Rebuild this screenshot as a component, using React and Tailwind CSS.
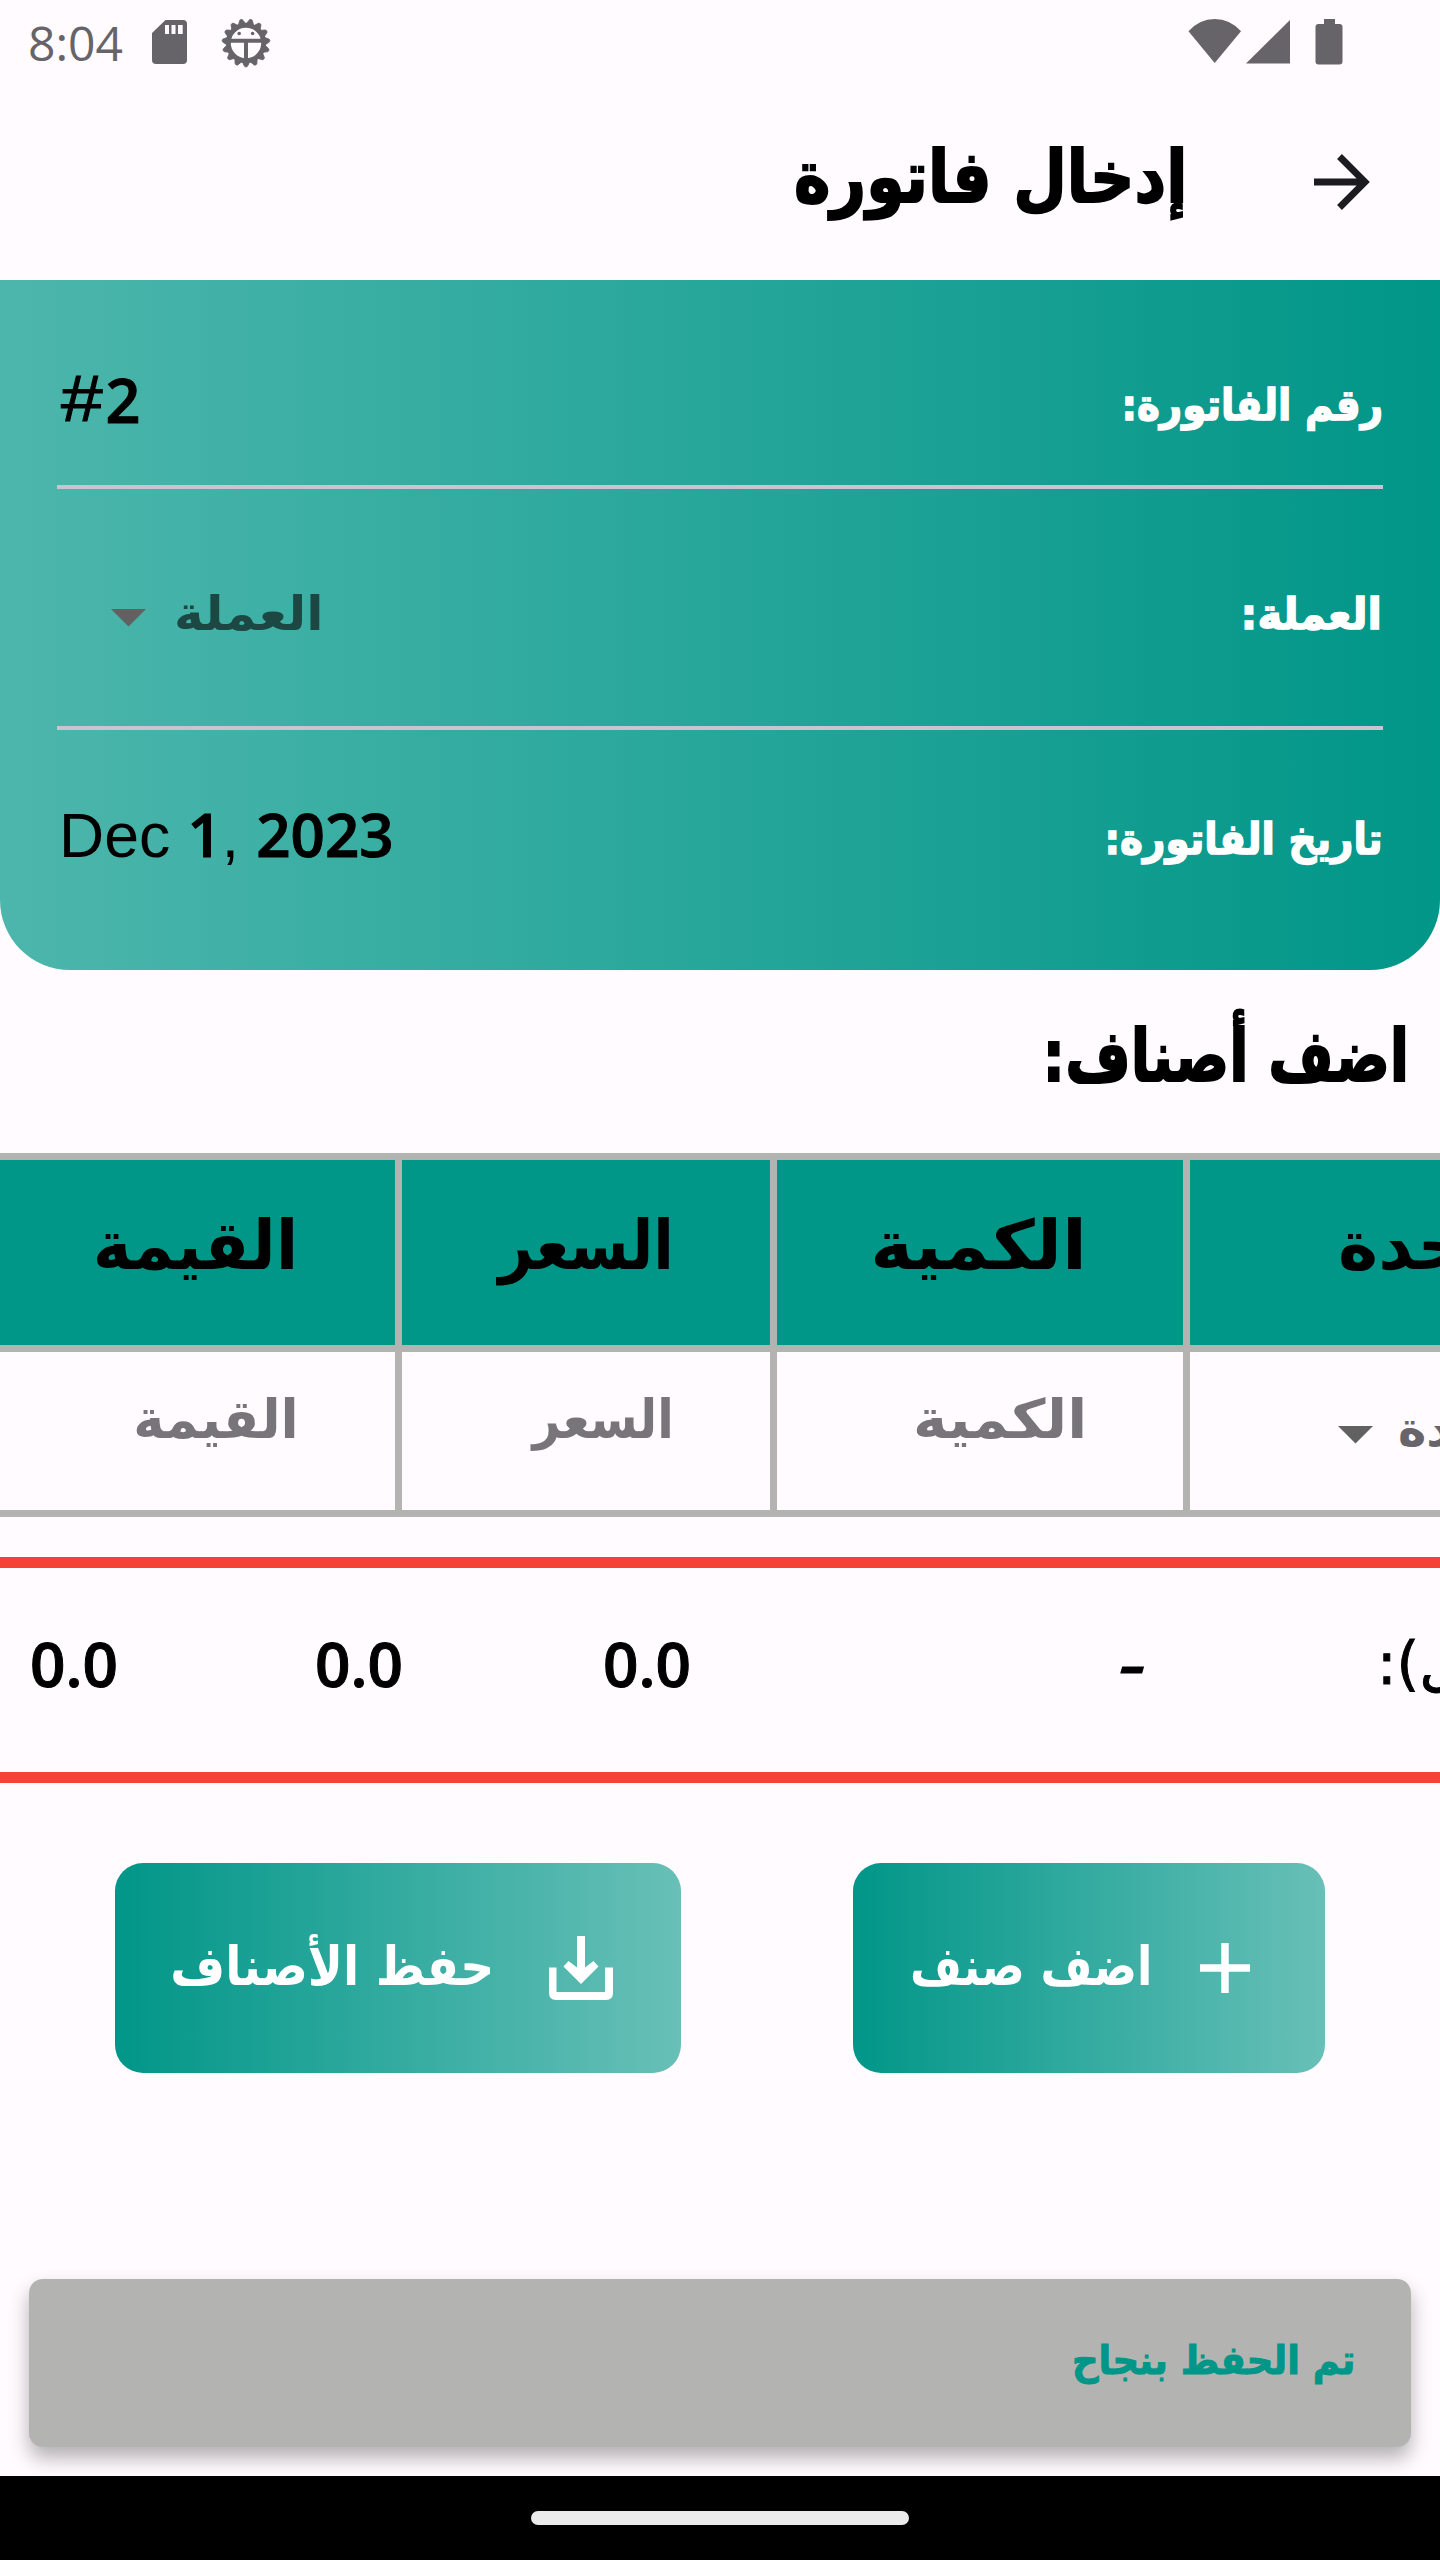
const arabic = "block shrink-0 whitespace-nowrap font-['DejaVu_Sans',sans-serif] leading-[80px]";

function Ar({ className, children }) {
  return (
    <span dir="rtl" className={`${arabic} ${className}`}>
      {children}
    </span>
  );
}

function Caret({ className }) {
  return (
    <svg viewBox="0 0 35 17.5" className={`h-[17.5px] w-[35px] shrink-0 ${className}`}>
      <path d="M0 0H35L17.5 17.5Z" fill="#616161" />
    </svg>
  );
}

function GearIcon() {
  const teeth = Array.from({ length: 15 }, (_, i) => 90 + i * 24);
  return (
    <svg viewBox="-25 -25 50 50" className="ml-[34px] h-[50px] w-[50px]">
      <circle r="17.7" fill="none" stroke="#666468" strokeWidth="5" />
      {teeth.map((a) => (
        <path key={a} d="M17.5 -4.3L22.6 -1.9A2 2 0 0 1 22.6 1.9L17.5 4.3Z" fill="#666468" stroke="#666468" strokeWidth="0.8" transform={`rotate(${a})`} />
      ))}
      <path d="M-16.5 -2.3H16.5M0 -2.3V17" stroke="#666468" strokeWidth="4" />
      <circle cx="-6.8" cy="-9.5" r="1.8" fill="#666468" />
      <circle cx="6.6" cy="-9.5" r="1.8" fill="#666468" />
    </svg>
  );
}

function StatusBar() {
  return (
    <div className="flex h-[84px] items-start">
      <span className="ml-[28px] w-[97px] font-['Open_Sans',sans-serif] text-[48px] leading-[86px] text-[#666468]">8:04</span>
      <svg viewBox="0 0 35 44" className="ml-[27px] mt-[20px] h-[44px] w-[35px]">
        <path d="M13.5 0H31Q35 0 35 4V40Q35 44 31 44H4Q0 44 0 40V13Z" fill="#666468" />
        <path d="M13 5h4v9h-4zM19.5 5h4v9h-4zM26 5h4.700v9h-4.700z" fill="#fffbff" />
      </svg>
      <div className="mt-[18px]">
        <GearIcon />
      </div>
      <svg viewBox="0 0 155 46" className="ml-auto mr-[97px] mt-[19px] h-[46px] w-[155px]" fill="#666468">
        <path d="M0.500 12.200Q11.500 0 26.700 0T53 12.200L26.700 44Z" />
        <path d="M58 44.500L102 1V44.500Z" />
        <path d="M136 0H147V5H151.500Q154.500 5 154.500 8V42.500Q154.500 45.500 151.500 45.500H130.500Q127.500 45.500 127.500 42.500V8Q127.500 5 130.500 5H136Z" />
      </svg>
    </div>
  );
}

function Header() {
  return (
    <header className="flex h-[196px] items-start justify-end pr-[70px]">
      <Ar className="mt-[53px] origin-right scale-x-[0.858] text-[72px] font-bold text-black [-webkit-text-stroke:2px_#000]">إدخال فاتورة</Ar>
      <svg viewBox="0 0 56 56" className="ml-[127px] mt-[70px] h-[56px] w-[56px]" fill="none" stroke="#1c1b1f" strokeWidth="6.8">
        <path d="M0 28H50M25.500 2.500L51 28L25.500 53.500" />
      </svg>
    </header>
  );
}

function InvoiceCard() {
  return (
    <section className="h-[690px] rounded-b-[70px] bg-linear-to-r/srgb from-[#4db6ac] to-[#009688] px-[57px]">
      <div className="flex h-[205px] items-start justify-between">
        <p className="mt-[80px] whitespace-nowrap font-['Open_Sans',sans-serif] text-[61px] font-semibold leading-[80px] text-black [-webkit-text-stroke:1px_#000]">
          <span className="relative -top-[2px] ml-[4px] mr-[9px] inline-block origin-left scale-x-[1.17] font-['Liberation_Sans',sans-serif] text-[64px] font-normal leading-[60px]">#</span>
          2
        </p>
        <Ar className="mt-[85px] origin-right scale-x-[0.902] text-[43px] font-bold text-white [-webkit-text-stroke:1.5px_#fff]">رقم الفاتورة:</Ar>
      </div>
      <div className="h-[4px] bg-[#cac4d0]" />
      <div className="flex h-[237px] items-start justify-between">
        <div className="flex w-[266px] items-start justify-between">
          <Caret className="ml-[54px] mt-[120px]" />
          <Ar className="mt-[84px] origin-right scale-x-[1.050] text-[48px] font-bold text-[#1c4743]">العملة</Ar>
        </div>
        <Ar className="mr-[1px] mt-[85px] origin-right scale-x-[0.975] text-[43px] font-bold text-white [-webkit-text-stroke:1.5px_#fff]">العملة:</Ar>
      </div>
      <div className="h-[4px] bg-[#cac4d0]" />
      <div className="flex h-[240px] items-start justify-between">
        <p className="mt-[64px] whitespace-pre font-['Open_Sans',sans-serif] text-[60px] font-semibold leading-[80px] text-black">
          <span className="ml-[2px] font-['Liberation_Sans',sans-serif] text-[62.500px] font-normal">Dec </span>
          <span className="[-webkit-text-stroke:1px_#000]">1</span>
          <span className="font-['Liberation_Sans',sans-serif] text-[62px] font-normal">, </span>
          <span className="[-webkit-text-stroke:1px_#000]">2023</span>
        </p>
        <Ar className="mt-[69px] origin-right scale-x-[0.904] text-[43px] font-bold text-white [-webkit-text-stroke:1.5px_#fff]">تاريخ الفاتورة:</Ar>
      </div>
    </section>
  );
}

function ItemsTable() {
  return (
    <div className="grid grid-cols-[395px_368px_406px_250px] grid-rows-[185px_158px] gap-[7px] overflow-hidden bg-[#b3b3b1] py-[7px] text-black">
      <div className="flex justify-end overflow-hidden bg-[#009688] pr-[97px] pt-[46px]">
        <Ar className="origin-right scale-x-[0.968] text-[68px] font-bold">القيمة</Ar>
      </div>
      <div className="flex justify-end overflow-hidden bg-[#009688] pr-[96px] pt-[46px]">
        <Ar className="origin-right scale-x-[0.882] text-[68px] font-bold">السعر</Ar>
      </div>
      <div className="flex justify-end overflow-hidden bg-[#009688] pr-[96px] pt-[46px]">
        <Ar className="origin-right scale-x-[1.068] text-[68px] font-bold">الكمية</Ar>
      </div>
      <div className="flex justify-start overflow-hidden bg-[#009688] pl-[148px] pt-[46px]">
        <Ar className="text-[68px] font-bold">الوحدة</Ar>
      </div>
      <div className="flex justify-end overflow-hidden bg-[#fffbff] pr-[96px] pt-[28px] text-[#777579]">
        <Ar className="origin-right scale-x-[0.980] text-[54px] font-bold">القيمة</Ar>
      </div>
      <div className="flex justify-end overflow-hidden bg-[#fffbff] pr-[96px] pt-[28px] text-[#777579]">
        <Ar className="origin-right scale-x-[0.895] text-[54px] font-bold">السعر</Ar>
      </div>
      <div className="flex justify-end overflow-hidden bg-[#fffbff] pr-[96px] pt-[28px] text-[#777579]">
        <Ar className="origin-right scale-x-[1.080] text-[54px] font-bold">الكمية</Ar>
      </div>
      <div className="flex items-start justify-start overflow-hidden bg-[#fffbff] pl-[148px] pt-[37px] text-[#68656a]">
        <Caret className="mr-[25px] mt-[37px]" />
        <Ar className="text-[48px] font-bold">الوحدة</Ar>
      </div>
    </div>
  );
}

function Totals() {
  return (
    <div className="mt-[40px] flex h-[226px] items-start overflow-hidden border-y-[11px] border-[#f44336] pl-[30px] pt-[55px] font-['Open_Sans',sans-serif] text-[62px] font-semibold leading-[80px] text-black [-webkit-text-stroke:1px_#000]">
      <span className="w-[285px] shrink-0">0.0</span>
      <span className="w-[288px] shrink-0">0.0</span>
      <span className="w-[516px] shrink-0">0.0</span>
      <span className="w-[258px] shrink-0 origin-left scale-x-[1.35] italic">-</span>
      <Ar className="mt-[1px] text-[58px] font-normal">ل):</Ar>
    </div>
  );
}

function Actions() {
  return (
    <div className="mt-[80px] flex gap-[172px] pl-[115px]">
      <button className="flex h-[210px] w-[566px] items-start justify-end rounded-[28px] bg-linear-to-r/srgb from-[#009688] to-[#68c0b8] pr-[68px]">
        <Ar className="mt-[64px] origin-right scale-x-[0.875] text-[54px] font-bold text-white">حفظ الأصناف</Ar>
        <svg viewBox="0 0 64 64" className="ml-[55px] mt-[73px] h-[64px] w-[64px] shrink-0">
          <path d="M28 0H36V31.500L44.500 25L49.500 30.500L32 48L14.500 30.500L19.500 25L28 31.500Z" fill="#fff" />
          <path d="M0 31.500H7.500V56H56V31.500H64V57Q64 64 57 64H7Q0 64 0 57Z" fill="#fff" />
        </svg>
      </button>
      <button className="flex h-[210px] w-[472px] items-start justify-end rounded-[28px] bg-linear-to-r/srgb from-[#009688] to-[#68c0b8] pr-[75px]">
        <Ar className="mt-[64px] origin-right scale-x-[0.829] text-[54px] font-bold text-white">اضف صنف</Ar>
        <svg viewBox="0 0 50 50" className="ml-[48px] mt-[80px] h-[50px] w-[50px] shrink-0" stroke="#fff" strokeWidth="7.500">
          <path d="M0 25H50M25 0V50" />
        </svg>
      </button>
    </div>
  );
}

export default function App() {
  return (
    <main className="flex h-[2560px] w-[1440px] flex-col overflow-hidden bg-[#fffbff]">
      <StatusBar />
      <Header />
      <InvoiceCard />
      <div className="flex h-[183px] items-start justify-end pr-[31px]">
        <Ar className="mt-[46px] origin-right scale-x-[0.783] text-[72px] font-bold text-black [-webkit-text-stroke:2px_#000]">اضف أصناف:</Ar>
      </div>
      <ItemsTable />
      <Totals />
      <Actions />
      <div className="mx-[29px] mt-[206px] flex h-[168px] items-start justify-end rounded-[14px] bg-[#b3b3b1] pr-[56px] shadow-[0_11px_20px_rgba(0,0,0,0.3)]">
        <Ar className="mt-[41px] origin-right scale-x-[0.922] text-[40px] font-bold text-[#009688] [-webkit-text-stroke:1px_#009688]">تم الحفظ بنجاح</Ar>
      </div>
      <div className="mt-[29px] flex h-[84px] shrink-0 justify-center bg-black pt-[35px]">
        <div className="h-[14px] w-[378px] rounded-full bg-[#ebebeb]" />
      </div>
    </main>
  );
}
